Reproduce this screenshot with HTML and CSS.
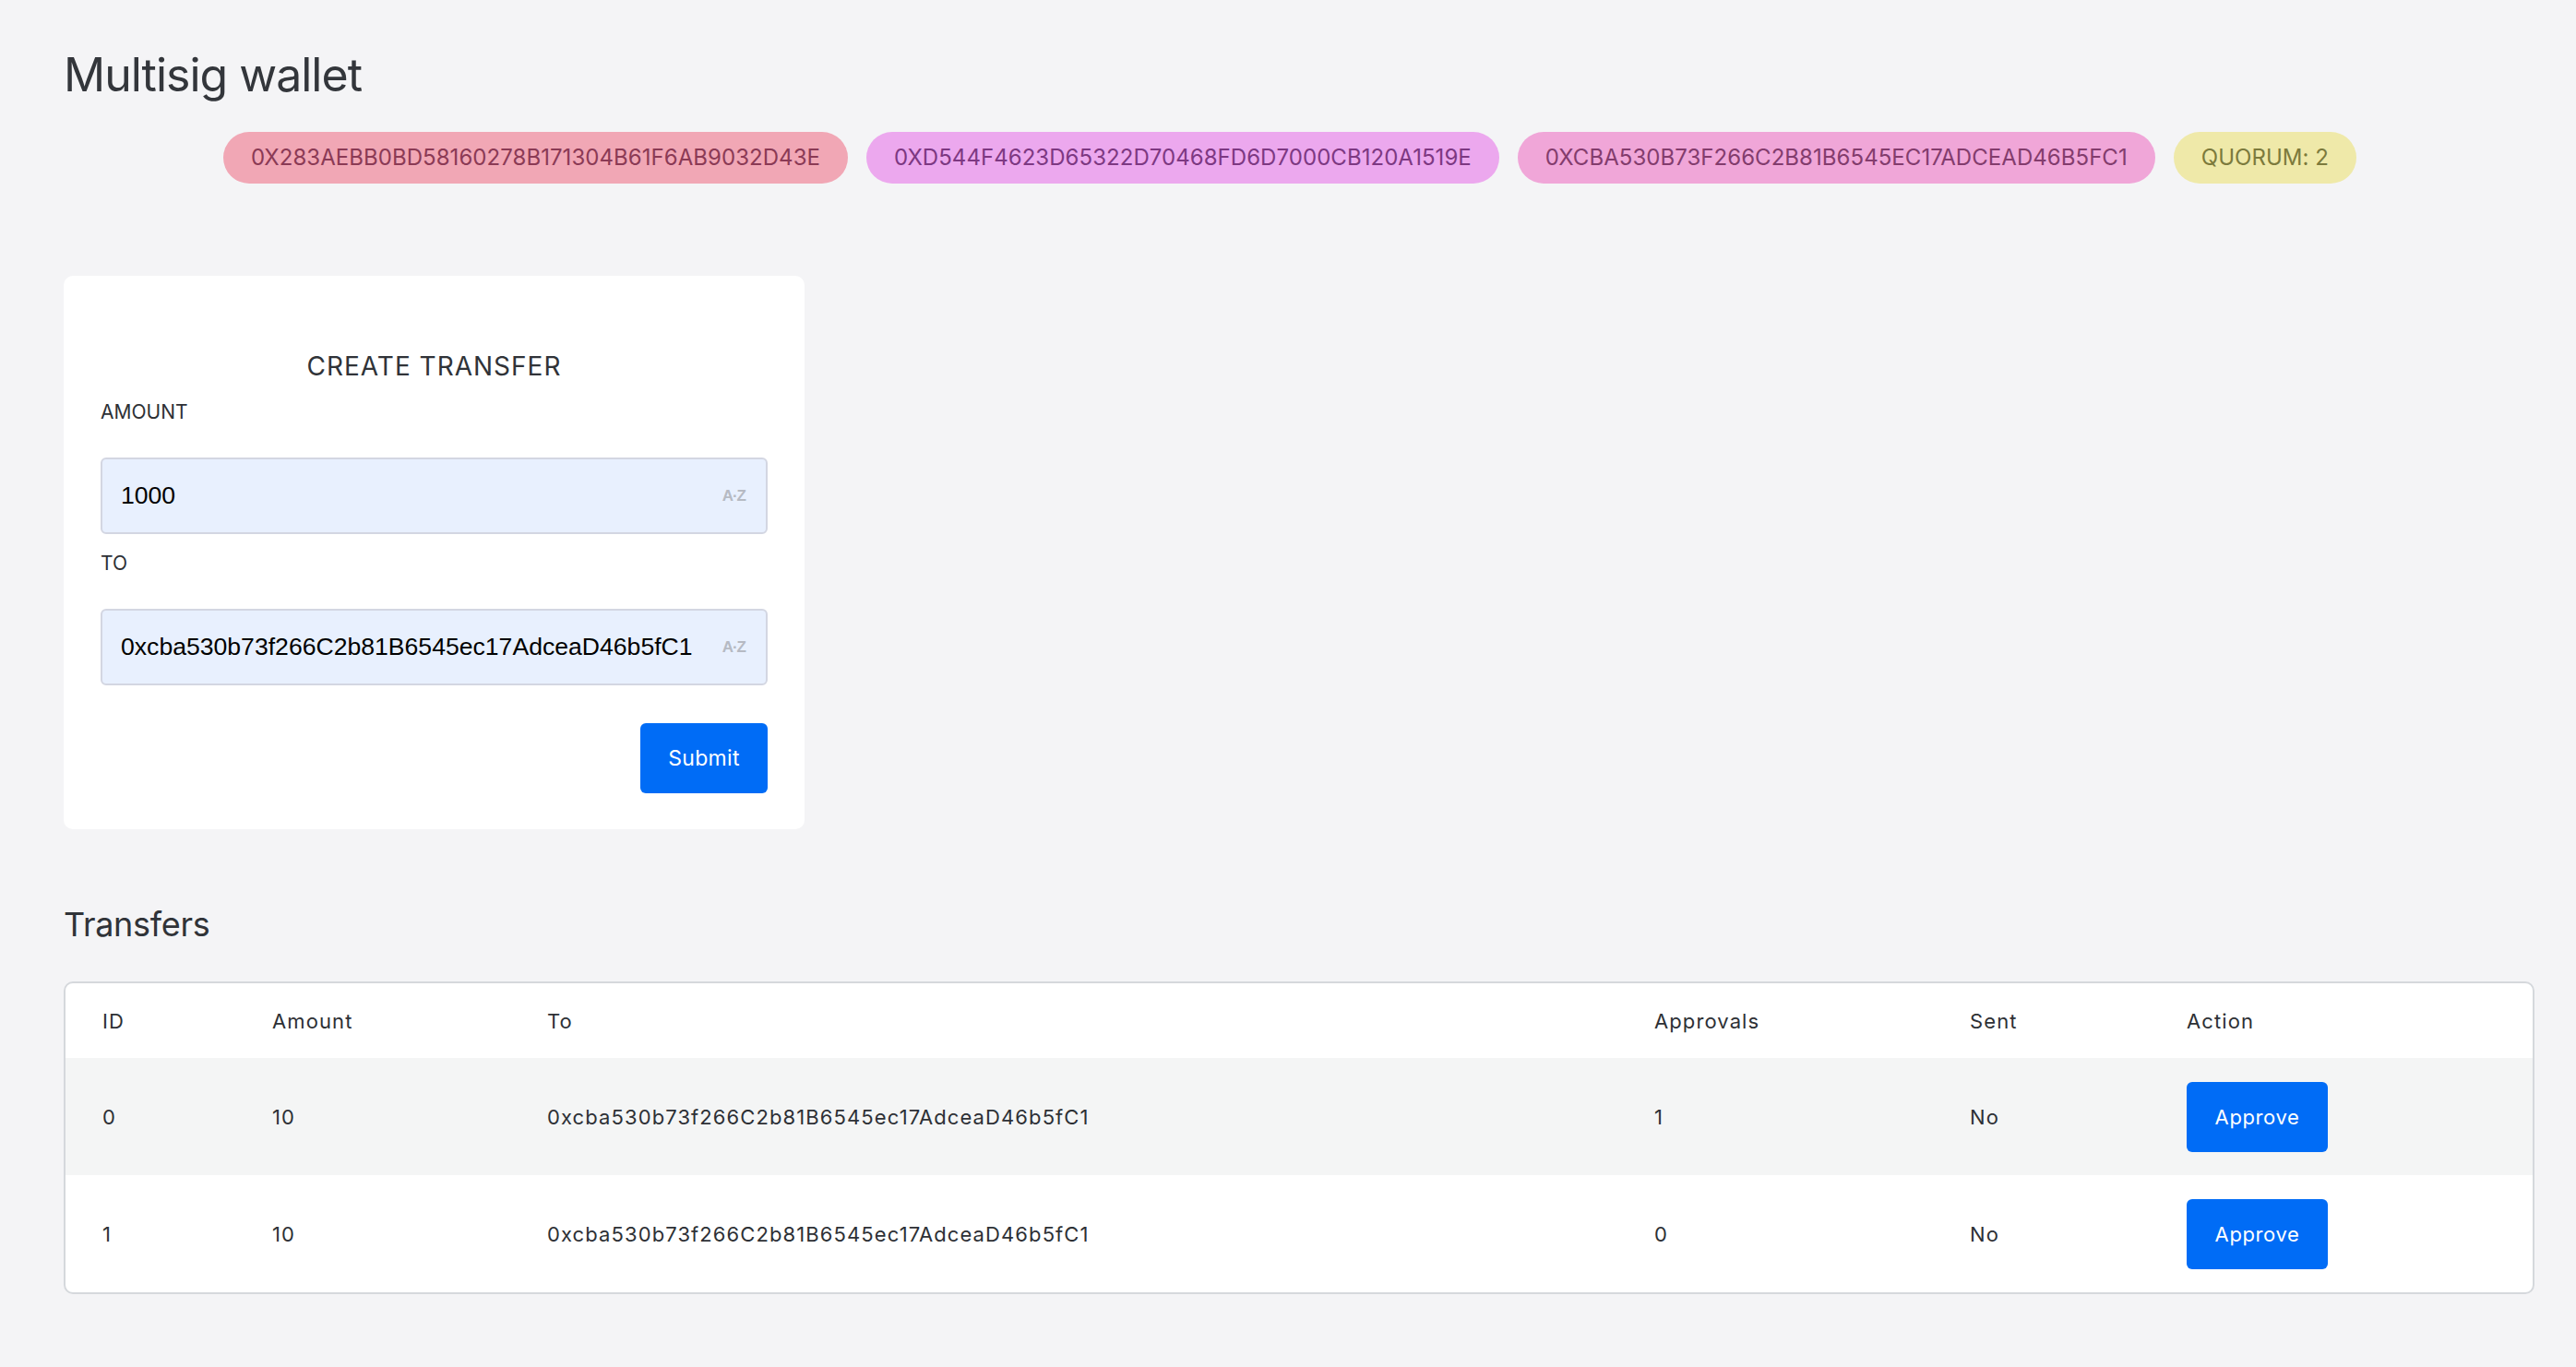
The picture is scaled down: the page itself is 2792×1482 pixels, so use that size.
FILE: index.html
```html
<!DOCTYPE html>
<html lang="en">
<head>
<meta charset="utf-8">
<title>Multisig wallet</title>
<link rel="stylesheet" href="styles.css">
</head>
<body>
<main class="page">
  <h1 class="title">Multisig wallet</h1>
  <div class="badges">
    <span class="badge badge-red">0X283AEBB0BD58160278B171304B61F6AB9032D43E</span>
    <span class="badge badge-violet">0XD544F4623D65322D70468FD6D7000CB120A1519E</span>
    <span class="badge badge-pink">0XCBA530B73F266C2B81B6545EC17ADCEAD46B5FC1</span>
    <span class="badge badge-yellow">QUORUM: 2</span>
  </div>

  <form class="card">
    <h2 class="card-title">CREATE TRANSFER</h2>
    <label class="label label-first">AMOUNT</label>
    <div class="input">
      <span class="input-value">1000</span>
      <span class="input-icon">A·Z</span>
    </div>
    <label class="label">TO</label>
    <div class="input">
      <span class="input-value">0xcba530b73f266C2b81B6545ec17AdceaD46b5fC1</span>
      <span class="input-icon">A·Z</span>
    </div>
    <div class="actions">
      <button type="button" class="btn btn-submit">Submit</button>
    </div>
  </form>

  <h2 class="section-title">Transfers</h2>
  <div class="table-wrap">
    <table class="table">
      <colgroup>
        <col class="c-id"><col class="c-amount"><col class="c-to"><col class="c-appr"><col class="c-sent"><col class="c-action">
      </colgroup>
      <thead>
        <tr><th>ID</th><th>Amount</th><th>To</th><th>Approvals</th><th>Sent</th><th>Action</th></tr>
      </thead>
      <tbody>
        <tr class="row-alt">
          <td>0</td><td>10</td><td>0xcba530b73f266C2b81B6545ec17AdceaD46b5fC1</td><td>1</td><td>No</td>
          <td><button type="button" class="btn btn-approve">Approve</button></td>
        </tr>
        <tr>
          <td>1</td><td>10</td><td>0xcba530b73f266C2b81B6545ec17AdceaD46b5fC1</td><td>0</td><td>No</td>
          <td><button type="button" class="btn btn-approve">Approve</button></td>
        </tr>
      </tbody>
    </table>
  </div>
</main>
</body>
</html>
```

FILE: styles.css
```css
* { box-sizing: border-box; }

html, body {
  margin: 0;
  background: #f4f4f6;
}

body {
  font-family: Inter, "Noto Sans", sans-serif;
  color: #303338;
}

.page {
  padding: 0 45px 80px 69px;
}

.title {
  margin: 0;
  padding-top: 51px;
  font-size: 50px;
  line-height: 60px;
  font-weight: 400;
  letter-spacing: -1px;
  color: #33363b;
}

.badges {
  margin-top: 32px;
  display: flex;
  justify-content: center;
  gap: 20px;
  padding-right: 20px;
}

.badge {
  display: inline-flex;
  align-items: center;
  height: 56px;
  padding: 0 30px;
  border-radius: 28px;
  font-size: 24px;
  letter-spacing: 0.05px;
  line-height: 1;
}
.badge-red { background: #f1a7b5; color: #8b3a55; }
.badge-violet { background: #eca8ee; color: #7d3882; }
.badge-pink { background: #f0a6d8; color: #833c6d; }
.badge-yellow { background: #efe9a9; color: #7c7a3c; }

.card {
  margin-top: 100px;
  width: 803px;
  background: #ffffff;
  border-radius: 10px;
  padding: 78px 40px 39px;
  display: flex;
  flex-direction: column;
}

.card-title {
  margin: 0;
  text-align: center;
  font-size: 28px;
  line-height: 40px;
  font-weight: 400;
  letter-spacing: 1px;
  color: #303338;
}

.label {
  display: block;
  margin-top: 20px;
  margin-bottom: 37px;
  font-size: 21px;
  line-height: 24px;
  color: #2d3035;
}
.label-first { margin-top: 18px; }

.input {
  height: 83px;
  display: flex;
  align-items: center;
  justify-content: space-between;
  padding: 0 22px 0 20px;
  background: #e8f0fe;
  border: 2px solid #d3d6e2;
  border-radius: 6px;
}

.input-value {
  font-family: "Liberation Sans", Arial, sans-serif;
  font-size: 26.6px;
  color: #000;
}

.input-icon {
  font-family: "Liberation Sans", Arial, sans-serif;
  font-weight: 700;
  font-size: 17px;
  letter-spacing: -1px;
  color: #b6bac3;
}

.actions {
  margin-top: 41px;
  display: flex;
  justify-content: flex-end;
}

.btn {
  border: 0;
  background: #006cf6;
  color: #ffffff;
  font-family: Inter, "Noto Sans", sans-serif;
  border-radius: 6px;
  cursor: pointer;
  padding: 0;
}

.btn-submit {
  width: 138px;
  height: 76px;
  font-size: 23px;
  letter-spacing: 0.3px;
}

.section-title {
  margin: 81px 0 0;
  font-size: 36px;
  line-height: 44px;
  font-weight: 400;
  letter-spacing: -0.3px;
  color: #303338;
}

.table-wrap {
  margin-top: 40px;
  background: #ffffff;
  border: 2px solid #d5d8dc;
  border-radius: 10px;
  overflow: hidden;
}

.table {
  width: 100%;
  border-collapse: collapse;
  table-layout: fixed;
  font-size: 22px;
  letter-spacing: 1.1px;
  color: #2d3035;
}

.c-id { width: 184px; }
.c-amount { width: 298px; }
.c-to { width: 1200px; }
.c-appr { width: 342px; }
.c-sent { width: 235px; }

.table th,
.table td {
  text-align: left;
  font-weight: 400;
  padding: 0 0 0 40px;
}

.table thead tr { height: 81px; }
.table tbody tr { height: 127px; }
.row-alt { background: #f4f5f5; }

.btn-approve {
  width: 153px;
  height: 76px;
  font-size: 22px;
  letter-spacing: 0.6px;
  vertical-align: middle;
}
```
